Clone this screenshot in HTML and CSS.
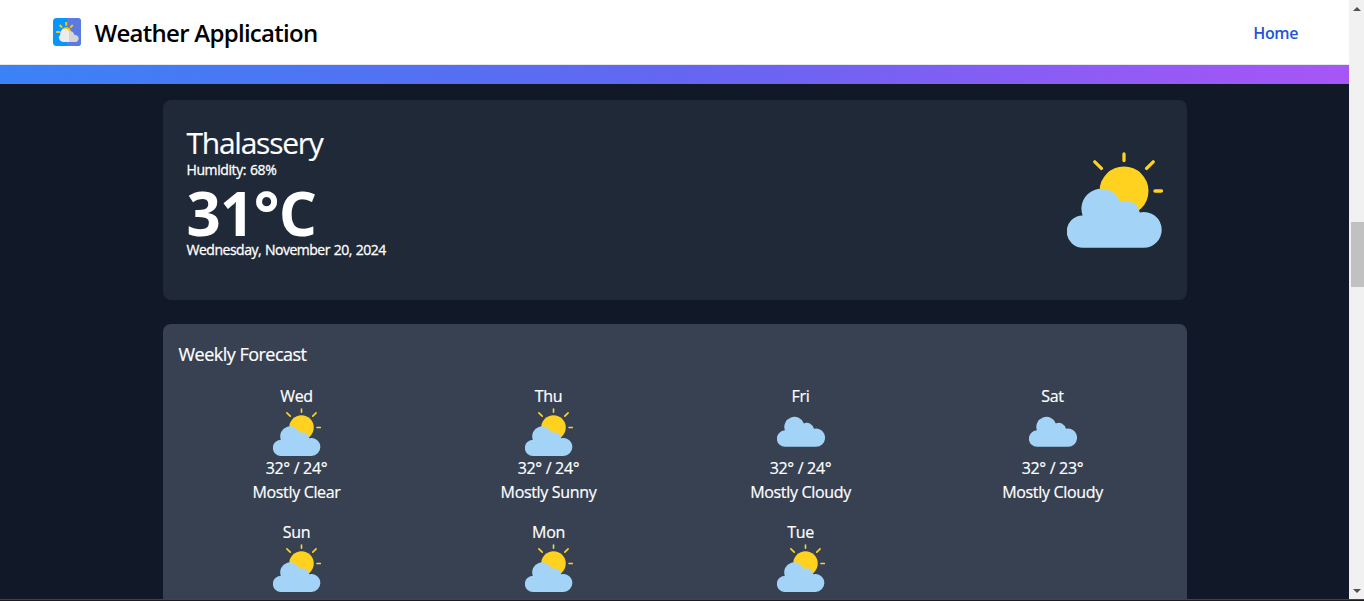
FILE: index.html
```
<!DOCTYPE html>
<html lang="en">
<head>
<meta charset="utf-8">
<title>Weather Application</title>
<link rel="stylesheet" href="styles.css">
</head>
<body>
<svg class="defs" width="0" height="0" aria-hidden="true">
  <symbol id="cloud" viewBox="0 0 96 96">
    <path fill="#a3d4f7" d="M16.2 95.8A16.2 16.2 0 0 1 15.6 63.4A19.7 19.7 0 1 1 53 49.8A14.5 14.5 0 0 1 72.8 60.4A17.9 17.9 0 0 1 94.7 77.9A17.9 17.9 0 0 1 76.8 95.8Z"/>
  </symbol>
  <symbol id="sunny" viewBox="0 0 96 96">
    <circle cx="57" cy="39" r="24.5" fill="#ffd21f"/>
    <path d="M57 2v6.5M27.8 9.8l6.6 6.6M86.2 9.8l-6.6 6.6M88 39h6.5" stroke="#ffd21f" stroke-width="3.3" stroke-linecap="round"/>
    <use href="#cloud"/>
  </symbol>
  <symbol id="cloudy" viewBox="0 0 48 48">
    <use href="#cloud" x="0" y="-9.8" width="48.7" height="48.7"/>
  </symbol>
</svg>
<div class="window">
  <div class="page">
    <header class="navbar">
      <div class="brand">
        <svg class="logo" viewBox="0 0 28 28">
          <rect width="28" height="28" rx="3.5" fill="#0795fe"/>
          <path fill="#5c7be2" d="M14 0h10.500a3.500 3.500 0 0 1 3.500 3.500v21a3.500 3.500 0 0 1-3.500 3.500H14z"/>
          <path d="M13.200 4v3.800M6.600 7l2.500 2.500M19.800 7l-2.500 2.500M3.200 14h3.600" stroke="#ffc815" stroke-width="1.800"/>
          <circle cx="13.200" cy="14" r="4.800" fill="#ffc815"/>
          <path fill="#ececec" d="M10 24a4.400 4.400 0 0 1-2.700-7.600A4.800 4.800 0 0 1 16 13V24z"/>
          <path fill="#d4d4d9" d="M16 13a5.500 5.500 0 0 1 5.500 4 3.550 3.550 0 1 1 0 7H16z"/>
        </svg>
        <span class="brand-name">Weather Application</span>
      </div>
      <a class="home">Home</a>
    </header>
    <div class="stripe"></div>
    <main class="content">
      <section class="current">
        <div class="details">
          <h1 class="city">Thalassery</h1>
          <p class="humidity">Humidity: 68%</p>
          <p class="temp">31°C</p>
          <p class="date">Wednesday, November 20, 2024</p>
        </div>
        <svg class="current-icon"><use href="#sunny"/></svg>
      </section>
      <section class="weekly">
        <h2 class="weekly-title">Weekly Forecast</h2>
        <div class="days">
          <div class="day"><span>Wed</span><svg class="day-icon"><use href="#sunny"/></svg><span class="range">32° / 24°</span><span class="desc">Mostly Clear</span></div>
          <div class="day"><span>Thu</span><svg class="day-icon"><use href="#sunny"/></svg><span class="range">32° / 24°</span><span class="desc">Mostly Sunny</span></div>
          <div class="day"><span>Fri</span><svg class="day-icon"><use href="#cloudy"/></svg><span class="range">32° / 24°</span><span class="desc">Mostly Cloudy</span></div>
          <div class="day"><span>Sat</span><svg class="day-icon"><use href="#cloudy"/></svg><span class="range">32° / 23°</span><span class="desc">Mostly Cloudy</span></div>
          <div class="day"><span>Sun</span><svg class="day-icon"><use href="#sunny"/></svg></div>
          <div class="day"><span>Mon</span><svg class="day-icon"><use href="#sunny"/></svg></div>
          <div class="day"><span>Tue</span><svg class="day-icon"><use href="#sunny"/></svg></div>
        </div>
      </section>
    </main>
  </div>
  <div class="scrollbar">
    <svg class="arrow" viewBox="0 0 8 4"><path d="M0 4l4-4 4 4z"/></svg>
    <div class="thumb"></div>
    <svg class="arrow" viewBox="0 0 8 4"><path d="M0 0l4 4 4-4z"/></svg>
  </div>
</div>
<div class="frame-edge"></div>
</body>
</html>
```
FILE: styles.css
```
* { box-sizing: border-box; margin: 0; }
body { height: 601px; overflow: hidden; background: #111827; font-family: "Segoe UI", "Open Sans", "Noto Sans", sans-serif; color: #fff; }
.defs { display: none; }
.window { display: flex; height: 599px; }
.page { width: 1349px; height: 599px; overflow: hidden; }
.navbar { height: 65px; padding: 0 51px 0 53px; display: flex; align-items: center; justify-content: space-between; background: #fff; border-bottom: 1px solid #e5e7eb; }
.brand { display: flex; align-items: center; gap: 13.5px; }
.logo { width: 28px; height: 28px; }
.brand-name { color: #000; font-size: 24px; line-height: 32px; font-weight: 600; letter-spacing: -0.72px; padding-top: 1px; }
.home { color: #2354da; font-size: 16px; line-height: 24px; font-weight: 600; letter-spacing: -0.4px; padding-top: 1px; }
.stripe { height: 19px; background: linear-gradient(to right, #3b82f6, #6366f1, #a855f7); }
.content { width: 1024px; margin: 0 auto; padding-top: 16px; display: flex; flex-direction: column; gap: 24px; }
.current { height: 200px; padding: 24px; border-radius: 8px; background: #1f2937; display: flex; justify-content: space-between; align-items: center; }
.details { height: 152px; }
.city { font-size: 30px; line-height: 36px; font-weight: 400; letter-spacing: -1.25px; padding-top: 1px; -webkit-text-stroke: 0.15px; }
.humidity, .date { font-size: 14px; line-height: 20px; font-weight: 400; letter-spacing: -0.48px; word-spacing: 0.6px; -webkit-text-stroke: 0.3px; }
.humidity { margin-top: -1px; letter-spacing: -0.4px; }
.temp { font-size: 60px; line-height: 60px; height: 60px; padding: 3px 0 0 0; font-weight: 700; letter-spacing: -0.7px; }
.current-icon { width: 96px; height: 96px; }
.weekly { height: 460px; padding: 16px; border-radius: 8px; background: #374151; }
.weekly-title { font-size: 18px; line-height: 28px; font-weight: 400; letter-spacing: -0.52px; margin-bottom: 16px; -webkit-text-stroke: 0.2px; }
.days { display: grid; grid-template-columns: repeat(4, 1fr); gap: 16px; }
.day { display: flex; flex-direction: column; align-items: center; font-size: 16px; line-height: 24px; letter-spacing: -0.33px; -webkit-text-stroke: 0.2px; }
.day-icon { width: 48px; height: 48px; }
.scrollbar { width: 15px; background: #f1f1f1; display: flex; flex-direction: column; align-items: center; padding: 7px 0 6px; }
.arrow { width: 8px; height: 4px; fill: #505050; }
.thumb { width: 13px; height: 65px; margin: 211px 0 auto 2px; background: #c1c1c1; flex: none; }
.frame-edge { height: 2px; background: #1c1a1c; border-top: 1px solid #444247; }
```
